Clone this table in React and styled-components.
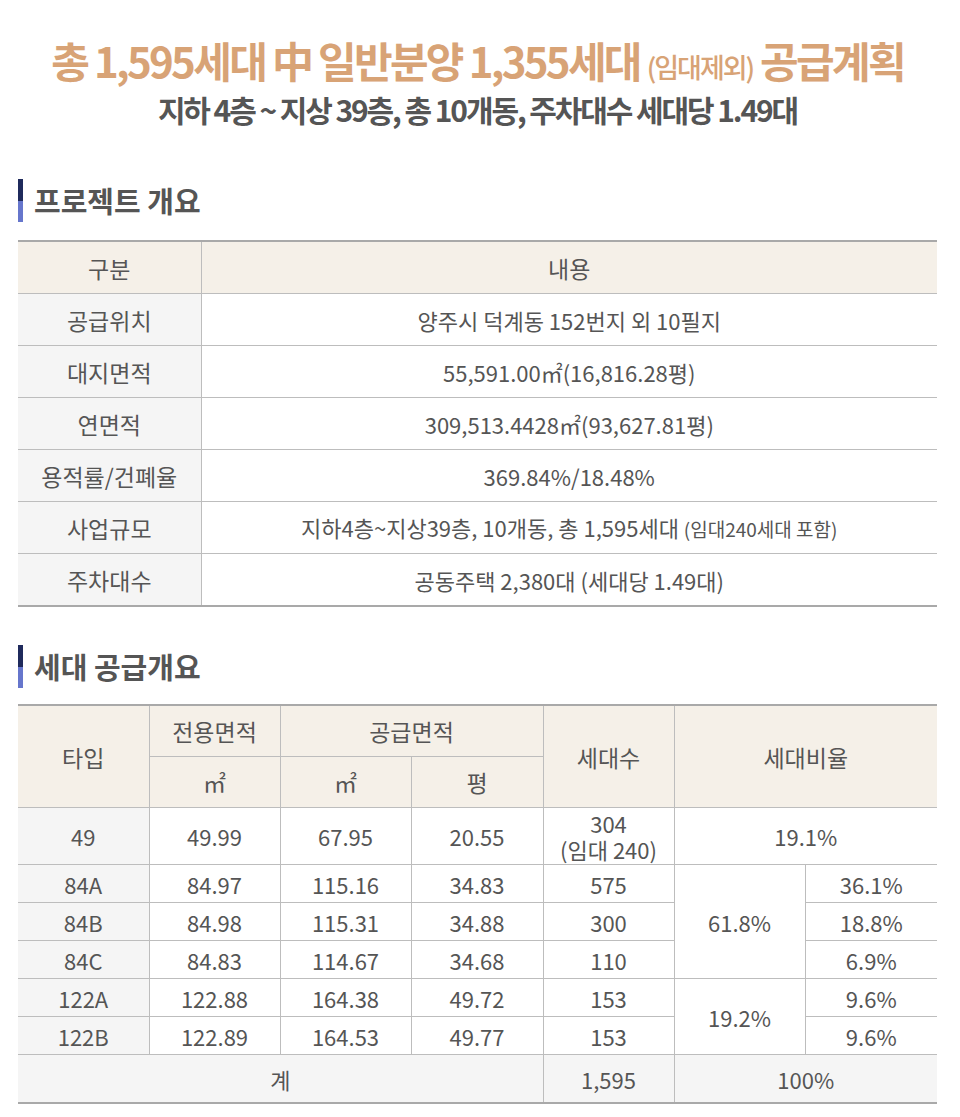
import React from 'react';
import styled, { createGlobalStyle } from 'styled-components';

const GlobalStyle = createGlobalStyle`
  html, body {
    margin: 0;
    padding: 0;
    background: #fff;
  }
  body {
    font-family: "Noto Sans CJK KR", "Noto Sans", sans-serif;
    color: #555;
  }
`;

const Page = styled.div`
  width: 960px;
  padding: 35px 23px 10px 18px;
  box-sizing: border-box;
`;

const Hero = styled.header`
  text-align: center;
`;

const HeroTitle = styled.h1`
  margin: 0;
  height: 50px;
  font-size: 42px;
  line-height: 50px;
  font-weight: 700;
  color: #d8a376;
  letter-spacing: -2.7px;
  white-space: nowrap;
`;

const HeroSmall = styled.span`
  font-size: 27px;
  line-height: 1;
  font-weight: 500;
  letter-spacing: -2px;
`;

const HeroSub = styled.p`
  margin: 4px 0 0;
  height: 40px;
  font-size: 30px;
  line-height: 40px;
  font-weight: 700;
  color: #555;
  letter-spacing: -2.1px;
  white-space: nowrap;
`;

const SectionHead = styled.h2`
  display: flex;
  align-items: center;
  gap: 11px;
  height: 43px;
  margin: ${p => p.$top}px 0 ${p => p.$bottom}px;
  font-size: 29px;
  line-height: 43px;
  font-weight: 700;
  color: #555;

  &::before {
    content: '';
    width: 5px;
    height: 43px;
    background: linear-gradient(#1f2a5c 0 52%, #6676cc 52% 100%);
  }
`;

const Table = styled.table`
  width: 919px;
  border-collapse: collapse;
  table-layout: fixed;
  border-top: 2px solid #a9a9a9;
  border-bottom: 2px solid #a9a9a9;
  color: #555;
`;

const Th = styled.th`
  height: ${p => p.$h || 50}px;
  padding: 0;
  background: #f5f0e8;
  font-size: 23px;
  font-weight: 400;
  text-align: center;
  border: 1px solid #bdbdbd;
  border-top: none;
  &:first-child { border-left: none; }
  &:last-child { border-right: none; }
`;

const Td = styled.td`
  height: ${p => p.$h || 37}px;
  padding: 0;
  text-align: center;
  line-height: 26px;
  background: ${p => (p.$shade ? '#f5f5f5' : '#fff')};
  border: 1px solid #bdbdbd;
  font-size: ${p => p.$size || 22}px;
  &:first-child { border-left: none; }
  &:last-child { border-right: none; }
`;

const Note = styled.span`
  font-size: 19px;
`;

const overview = [
  ['공급위치', '양주시 덕계동 152번지 외 10필지'],
  ['대지면적', '55,591.00㎡(16,816.28평)'],
  ['연면적', '309,513.4428㎡(93,627.81평)'],
  ['용적률/건폐율', '369.84%/18.48%'],
  ['사업규모', <>지하4층~지상39층, 10개동, 총 1,595세대 <Note>(임대240세대 포함)</Note></>],
  ['주차대수', '공동주택 2,380대 (세대당 1.49대)'],
];

export default function App() {
  return (
    <Page>
      <GlobalStyle />
      <Hero>
        <HeroTitle>
          총 1,595세대 中 일반분양 1,355세대 <HeroSmall>(임대제외)</HeroSmall> 공급계획
        </HeroTitle>
        <HeroSub>지하 4층 ~ 지상 39층, 총 10개동, 주차대수 세대당 1.49대</HeroSub>
      </Hero>

      <SectionHead $top={50} $bottom={18}>프로젝트 개요</SectionHead>
      <Table>
        <colgroup>
          <col style={{ width: 183 }} />
          <col />
        </colgroup>
        <thead>
          <tr>
            <Th $h={51}>구분</Th>
            <Th $h={51}>내용</Th>
          </tr>
        </thead>
        <tbody>
          {overview.map(([k, v]) => (
            <tr key={k}>
              <Td $h={51} $size={23} $shade>{k}</Td>
              <Td $h={51}>{v}</Td>
            </tr>
          ))}
        </tbody>
      </Table>

      <SectionHead $top={38} $bottom={16}>세대 공급개요</SectionHead>
      <Table>
        <colgroup>
          <col style={{ width: 131 }} />
          <col style={{ width: 131 }} />
          <col style={{ width: 131 }} />
          <col style={{ width: 132 }} />
          <col style={{ width: 131 }} />
          <col style={{ width: 131 }} />
          <col />
        </colgroup>
        <thead>
          <tr>
            <Th rowSpan={2}>타입</Th>
            <Th>전용면적</Th>
            <Th colSpan={2}>공급면적</Th>
            <Th rowSpan={2}>세대수</Th>
            <Th rowSpan={2} colSpan={2}>세대비율</Th>
          </tr>
          <tr>
            <Th>㎡</Th>
            <Th>㎡</Th>
            <Th>평</Th>
          </tr>
        </thead>
        <tbody>
          <tr>
            <Td $h={56} $shade>49</Td>
            <Td $h={56}>49.99</Td>
            <Td $h={56}>67.95</Td>
            <Td $h={56}>20.55</Td>
            <Td $h={56}>304<br />(임대 240)</Td>
            <Td $h={56} colSpan={2}>19.1%</Td>
          </tr>
          <tr>
            <Td $shade>84A</Td>
            <Td>84.97</Td>
            <Td>115.16</Td>
            <Td>34.83</Td>
            <Td>575</Td>
            <Td rowSpan={3}>61.8%</Td>
            <Td>36.1%</Td>
          </tr>
          <tr>
            <Td $shade>84B</Td>
            <Td>84.98</Td>
            <Td>115.31</Td>
            <Td>34.88</Td>
            <Td>300</Td>
            <Td>18.8%</Td>
          </tr>
          <tr>
            <Td $shade>84C</Td>
            <Td>84.83</Td>
            <Td>114.67</Td>
            <Td>34.68</Td>
            <Td>110</Td>
            <Td>6.9%</Td>
          </tr>
          <tr>
            <Td $shade>122A</Td>
            <Td>122.88</Td>
            <Td>164.38</Td>
            <Td>49.72</Td>
            <Td>153</Td>
            <Td rowSpan={2}>19.2%</Td>
            <Td>9.6%</Td>
          </tr>
          <tr>
            <Td $shade>122B</Td>
            <Td>122.89</Td>
            <Td>164.53</Td>
            <Td>49.77</Td>
            <Td>153</Td>
            <Td>9.6%</Td>
          </tr>
          <tr>
            <Td $h={47} $shade colSpan={4}>계</Td>
            <Td $h={47} $shade>1,595</Td>
            <Td $h={47} $shade colSpan={2}>100%</Td>
          </tr>
        </tbody>
      </Table>
    </Page>
  );
}
